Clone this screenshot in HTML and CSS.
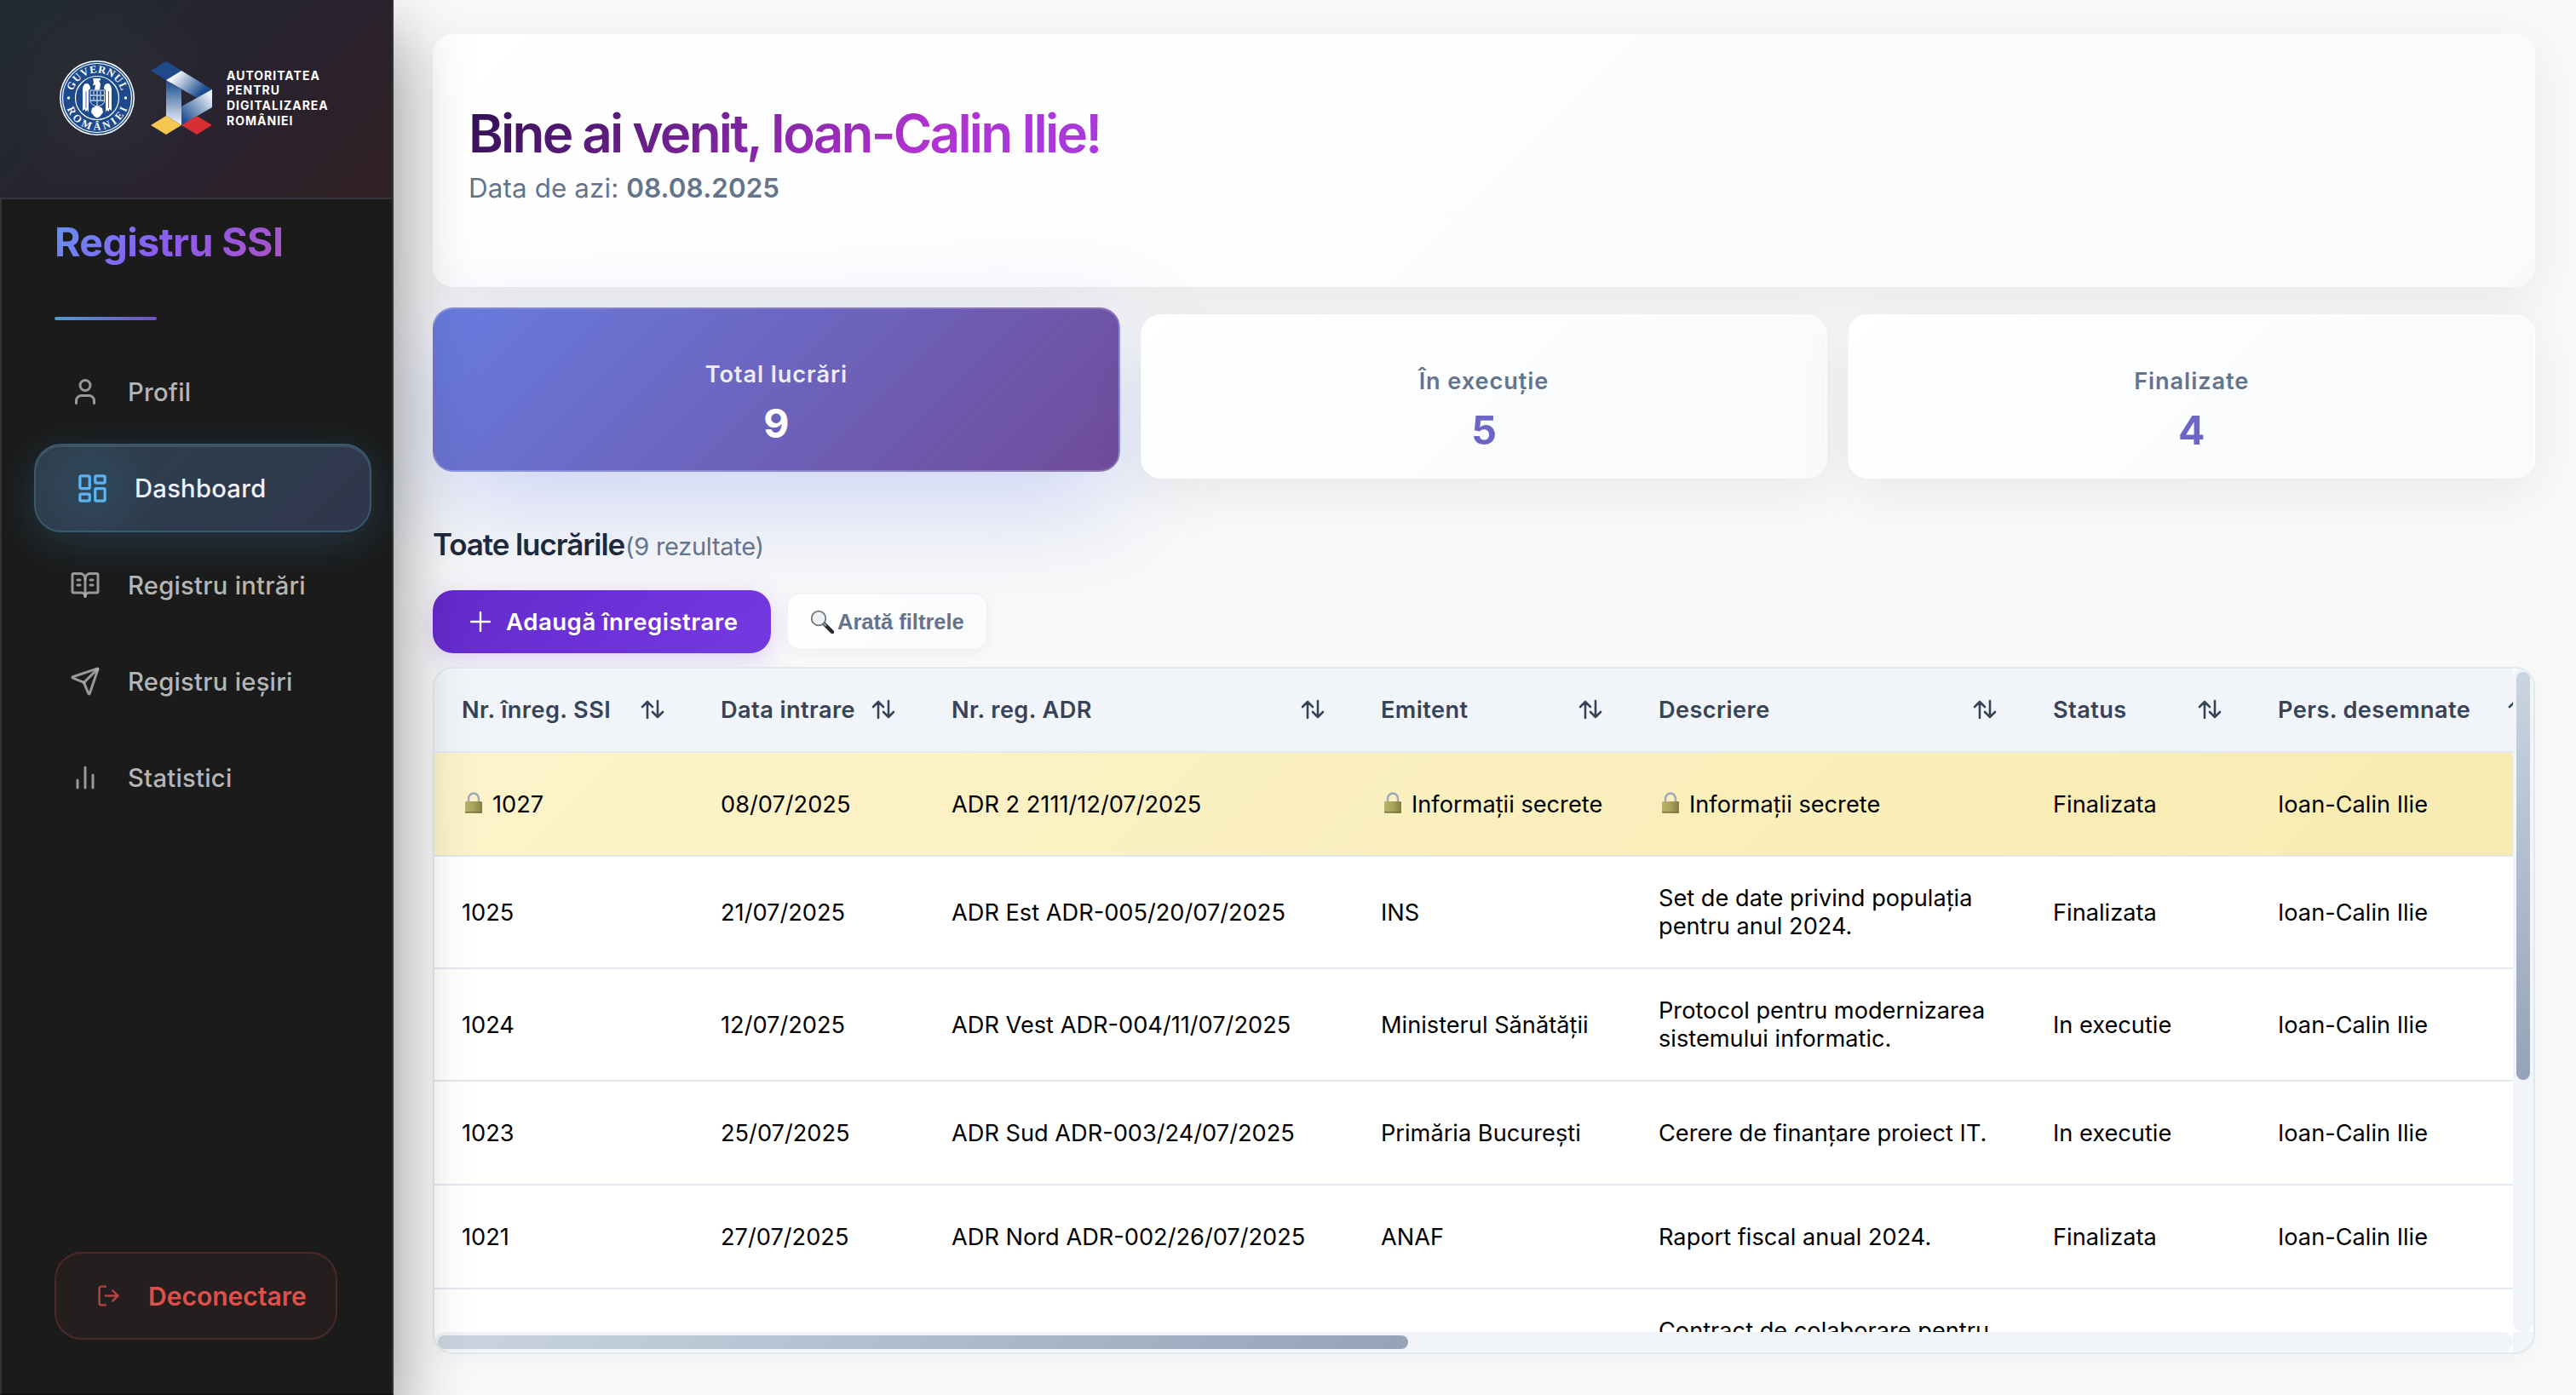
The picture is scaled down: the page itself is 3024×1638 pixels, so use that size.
FILE: index.html
```html
<!DOCTYPE html>
<html lang="ro">
<head>
<meta charset="utf-8">
<title>Registru SSI</title>
<link rel="stylesheet" href="styles.css">
</head>
<body>
<svg class="sprite" aria-hidden="true">
  <defs>
    <linearGradient id="lock-body" x1="0" x2="1"><stop offset="0" stop-color="#b9b36a"/><stop offset=".5" stop-color="#a9a25c"/><stop offset="1" stop-color="#857d42"/></linearGradient>
    <symbol id="sort" viewBox="0 0 28 24"><path d="M8 22V3M2 9l6-6 6 6M20 2v19M14 15l6 6 6-6"/></symbol>
    <symbol id="lock" viewBox="0 0 22 26">
      <path d="M5 12V8a6 6.5 0 0 1 12 0v4" fill="none" stroke="#9fa9b8" stroke-width="2.4"/>
      <rect x="1" y="11" width="20" height="14" rx="1" fill="url(#lock-body)"/>
      <path d="M1 23.6h20" stroke="#7c7440" stroke-width="1.4"/>
    </symbol>
  </defs>
</svg>
<div class="app">
  <aside class="sidebar">
    <header class="brand">
      <svg class="emblem" viewBox="0 0 88 88">
        <defs>
          <path id="arc-top" d="M14.5 44a29.5 29.5 0 0 1 59 0"/>
          <path id="arc-bottom" d="M6.5 44a37.5 37.5 0 0 0 75 0"/>
        </defs>
        <circle cx="44" cy="44" r="44" fill="#fff"/>
        <circle cx="44" cy="44" r="42.5" fill="#1d4a8d"/>
        <circle cx="44" cy="44" r="40.5" fill="none" stroke="#fff" stroke-width="1.2"/>
        <circle cx="44" cy="44" r="25.5" fill="none" stroke="#fff" stroke-width="1.2"/>
        <circle cx="10.5" cy="44" r="1.7" fill="#fff"/>
        <circle cx="77.5" cy="44" r="1.7" fill="#fff"/>
        <text class="emblem-text"><textPath href="#arc-top" startOffset="50%" text-anchor="middle" textLength="76">GUVERNUL</textPath></text>
        <text class="emblem-text"><textPath href="#arc-bottom" startOffset="50%" text-anchor="middle" textLength="92">ROMÂNIEI</textPath></text>
        <path d="M39 21h9v2.500h-2l2 4-1 7h-6l1-6-3 1 1-4z" fill="#fff"/>
        <path d="M36 33c0-4-2-6-5-6-3 1-4 4-4 8v24l2.500-2 1 3 2-2 1.500 3V35zM52 33c0-4 2-6 5-6 3 1 4 4 4 8v24l-2.500-2-1 3-2-2-1.500 3V35z" fill="#fff"/>
        <path d="M31 36v20M57.500 36v20" stroke="#1d4a8d" stroke-width=".8"/>
        <path d="M36 35h16.500v13c0 3-4 5-8 6-4.500-1-8.500-3-8.500-6z" fill="#1d4a8d" stroke="#dfe7f2" stroke-width="1"/>
        <path d="M44 35v18M36 41h16M36 47h16M40 36v4M48 36v4M40 43v3M48 42v4" stroke="#c5d2e6" stroke-width="1.3"/>
        <path d="M38 56l6-3 6 3 1 5-4 5-3 1.500L41 66l-4-5z" fill="#fff"/>
      </svg>
      <svg class="adr-mark" viewBox="0 0 74 86">
        <defs>
          <linearGradient id="adr-top" x1="0" y1=".2" x2="1" y2=".7"><stop offset=".15" stop-color="#f4f6fa"/><stop offset=".85" stop-color="#1d4f92"/></linearGradient>
          <linearGradient id="adr-left" x1="0" y1="0" x2="0" y2="1"><stop offset=".1" stop-color="#2a5a99"/><stop offset="1" stop-color="#f2f5fa"/></linearGradient>
          <linearGradient id="adr-right" x1="1" y1="0" x2="0" y2="1"><stop offset=".1" stop-color="#eef2f8"/><stop offset=".9" stop-color="#1d4f92"/></linearGradient>
        </defs>
        <path d="M1 11L19 0l18 11-18 11z" fill="#1d4a8d"/>
        <path d="M19 22v42l18 11V33z" fill="url(#adr-left)"/>
        <path d="M19 22l18-11 36 22-18 10z" fill="url(#adr-top)"/>
        <path d="M73 33v21L37 75V53z" fill="url(#adr-right)"/>
        <path d="M1 75l18-11 18 11-18 11z" fill="#f6c74f"/>
        <path d="M37 75l18-11 18 11-18 11z" fill="#d72f33"/>
      </svg>
      <p class="brand-name">Autoritatea<br>pentru<br>digitalizarea<br>României</p>
    </header>
    <h1 class="app-title">Registru SSI</h1>
    <div class="title-rule"></div>
    <nav class="menu">
      <a class="menu-item"><svg class="icon" viewBox="0 0 24 24"><path d="M19 21v-2a4 4 0 0 0-4-4H9a4 4 0 0 0-4 4v2"/><circle cx="12" cy="7" r="4"/></svg><span>Profil</span></a>
      <a class="menu-item active"><svg class="icon" viewBox="0 0 24 24"><rect x="3" y="3" width="7" height="9" rx="1"/><rect x="14" y="3" width="7" height="5" rx="1"/><rect x="14" y="12" width="7" height="9" rx="1"/><rect x="3" y="16" width="7" height="5" rx="1"/></svg><span>Dashboard</span></a>
      <a class="menu-item"><svg class="icon" viewBox="0 0 24 24"><path d="M12 7v14"/><path d="M16 12h2"/><path d="M16 8h2"/><path d="M3 18a1 1 0 0 1-1-1V4a1 1 0 0 1 1-1h5a4 4 0 0 1 4 4 4 4 0 0 1 4-4h5a1 1 0 0 1 1 1v13a1 1 0 0 1-1 1h-6a3 3 0 0 0-3 3 3 3 0 0 0-3-3z"/><path d="M6 12h2"/><path d="M6 8h2"/></svg><span>Registru intrări</span></a>
      <a class="menu-item"><svg class="icon" viewBox="0 0 24 24"><path d="M14.536 21.686a.5.5 0 0 0 .937-.024l6.500-19a.496.496 0 0 0-.635-.635l-19 6.500a.5.5 0 0 0-.024.937l7.930 3.180a2 2 0 0 1 1.112 1.110z"/><path d="m21.854 2.147-10.940 10.939"/></svg><span>Registru ieșiri</span></a>
      <a class="menu-item"><svg class="icon" viewBox="0 0 24 24"><path d="M18 20V10"/><path d="M12 20V4"/><path d="M6 20v-6"/></svg><span>Statistici</span></a>
    </nav>
    <button class="logout"><svg class="logout-icon" viewBox="0 0 24 24"><path d="M9 21H5a2 2 0 0 1-2-2V5a2 2 0 0 1 2-2h4"/><path d="M16 17l5-5-5-5"/><path d="M21 12H9"/></svg><span>Deconectare</span></button>
  </aside>
  <main class="content">
    <section class="welcome">
      <h2 class="welcome-title"><span>Bine ai venit, Ioan-Calin Ilie!</span></h2>
      <p class="welcome-date">Data de azi: <strong>08.08.2025</strong></p>
    </section>
    <section class="stats">
      <article class="stat selected"><span class="stat-label">Total lucrări</span><span class="stat-value">9</span></article>
      <article class="stat"><span class="stat-label">În execuție</span><span class="stat-value">5</span></article>
      <article class="stat"><span class="stat-label">Finalizate</span><span class="stat-value">4</span></article>
    </section>
    <div class="list-title"><h3>Toate lucrările</h3><span class="count">(9 rezultate)</span></div>
    <div class="toolbar">
      <button class="add"><svg class="plus" viewBox="0 0 24 24"><path d="M12 1v22M1 12h22"/></svg><span>Adaugă înregistrare</span></button>
      <button class="filters"><svg class="lens" viewBox="0 0 28 28"><path d="M17 17l9 9" stroke="#26282b" stroke-width="4.5" stroke-linecap="round"/><path d="M15 15l4 4" stroke="#8b9097" stroke-width="2.5"/><circle cx="10" cy="10" r="8.3" fill="#eef1f3" stroke="#6f757c" stroke-width="1.8"/></svg><span>Arată filtrele</span></button>
    </div>
    <section class="grid">
      <div class="viewport">
        <table>
          <colgroup><col class="c1"><col class="c2"><col class="c3"><col class="c4"><col class="c5"><col class="c6"><col class="c7"></colgroup>
          <thead><tr>
            <th><div class="head"><span>Nr. înreg. SSI</span><svg class="sort"><use href="#sort"/></svg></div></th>
            <th><div class="head"><span>Data intrare</span><svg class="sort"><use href="#sort"/></svg></div></th>
            <th><div class="head"><span>Nr. reg. ADR</span><svg class="sort"><use href="#sort"/></svg></div></th>
            <th><div class="head"><span>Emitent</span><svg class="sort"><use href="#sort"/></svg></div></th>
            <th><div class="head"><span>Descriere</span><svg class="sort"><use href="#sort"/></svg></div></th>
            <th><div class="head"><span>Status</span><svg class="sort"><use href="#sort"/></svg></div></th>
            <th><div class="head"><span>Pers. desemnate</span><svg class="sort"><use href="#sort"/></svg></div></th>
          </tr></thead>
          <tbody>
            <tr class="secret"><td><svg class="lock"><use href="#lock"/></svg>1027</td><td>08/07/2025</td><td>ADR 2 2111/12/07/2025</td><td><svg class="lock"><use href="#lock"/></svg>Informații secrete</td><td><svg class="lock"><use href="#lock"/></svg>Informații secrete</td><td>Finalizata</td><td>Ioan-Calin Ilie</td></tr>
            <tr class="tall"><td>1025</td><td>21/07/2025</td><td>ADR Est ADR-005/20/07/2025</td><td>INS</td><td>Set de date privind populația<br>pentru anul 2024.</td><td>Finalizata</td><td>Ioan-Calin Ilie</td></tr>
            <tr class="tall"><td>1024</td><td>12/07/2025</td><td>ADR Vest ADR-004/11/07/2025</td><td>Ministerul Sănătății</td><td>Protocol pentru modernizarea<br>sistemului informatic.</td><td>In executie</td><td>Ioan-Calin Ilie</td></tr>
            <tr><td>1023</td><td>25/07/2025</td><td>ADR Sud ADR-003/24/07/2025</td><td>Primăria București</td><td>Cerere de finanțare proiect IT.</td><td>In executie</td><td>Ioan-Calin Ilie</td></tr>
            <tr><td>1021</td><td>27/07/2025</td><td>ADR Nord ADR-002/26/07/2025</td><td>ANAF</td><td>Raport fiscal anual 2024.</td><td>Finalizata</td><td>Ioan-Calin Ilie</td></tr>
            <tr class="tall"><td></td><td></td><td></td><td></td><td>Contract de colaborare pentru<br>&nbsp;</td><td></td><td></td></tr>
          </tbody>
        </table>
      </div>
      <div class="track vertical"><div class="thumb"></div></div>
      <div class="track horizontal"><div class="thumb"></div></div>
      <div class="corner"></div>
    </section>
  </main>
</div>
</body>
</html>
```
FILE: styles.css
```css
* { box-sizing: border-box; margin: 0; padding: 0; }
body { background: #f9f9f9; font-family: Inter, "Liberation Sans", sans-serif; color: #000; overflow: hidden; }
button { font: inherit; border: 0; }
.sprite { position: absolute; width: 0; height: 0; }
.app { display: flex; width: 3024px; height: 1638px; }

/* Sidebar */
.sidebar { position: relative; z-index: 2; flex: 0 0 462px; display: flex; flex-direction: column; background: #1b1b1b; border: 2px solid #333; border-top: 0; border-bottom-color: #131213; box-shadow: 0 40px 80px rgba(0, 0, 0, .45); }
.brand { height: 234px; margin-left: -2px; padding: 0 0 2px 70px; display: flex; align-items: center; border-bottom: 2px solid #38343f; background: radial-gradient(circle at 130px 116px, rgba(255,255,255,.03), transparent 130px), linear-gradient(135deg, #222c30 0%, #272330 50%, #2c212a 75%, #312124 100%); }
.emblem { width: 88px; height: 88px; }
.emblem-text { font: 700 12.5px "Liberation Serif", serif; fill: #fff; }
.adr-mark { width: 74px; height: 86px; margin-left: 18px; }
.brand-name { margin-left: 16px; color: #fff; font-size: 14px; line-height: 17.7px; font-weight: 700; text-transform: uppercase; letter-spacing: 1px; }
.app-title { align-self: flex-start; margin: 20px 0 0 62px; font-size: 46.5px; line-height: 60px; font-weight: 700; letter-spacing: -.6px; color: transparent; background: linear-gradient(135deg, #6395f5 0%, #8b5cf0 50%, #ad52c0 100%); background-clip: text; -webkit-background-clip: text; }
.title-rule { width: 120px; height: 4px; margin: 58px 0 0 62px; border-radius: 2px; background: linear-gradient(90deg, #509bd0, #7150c4); }
.menu { margin: 32px 0 0 30px; display: flex; flex-direction: column; gap: 9.6px; }
.menu-item { width: 396px; height: 103.8px; border: 2px solid transparent; padding-left: 48px; display: flex; align-items: center; border-radius: 32px; color: #b5b5b5; font-size: 29.2px; font-weight: 500; letter-spacing: .25px; }
.menu-item span { padding-top: 1px; }
.icon { width: 36px; height: 36px; margin-right: 32px; fill: none; stroke: rgba(181,181,181,.82); stroke-width: 2; stroke-linecap: round; stroke-linejoin: round; }
.menu-item.active { margin-left: 8px; color: #eef2ff; border-color: #365a70; background: radial-gradient(circle at 68px 50px, rgba(60,140,180,.14), transparent 70px), linear-gradient(135deg, #2d404e, #30364c); box-shadow: 0 12px 48px rgba(66,153,200,.22), inset 0 2px 0 rgba(255,255,255,.1); }
.active .icon { width: 39px; height: 39px; margin: 0 30px 0 -1px; stroke: #5cb5f2; }
.logout { width: 332px; height: 103px; margin: auto 0 63px 62px; padding-left: 47px; display: flex; align-items: center; border: 2px solid #4b2a29; border-radius: 32px; background: #241e1e; color: #df504b; font-size: 30px; font-weight: 600; }
.logout-icon { width: 29px; height: 29px; margin-right: 32px; fill: none; stroke: #b44542; stroke-width: 2; stroke-linecap: round; stroke-linejoin: round; }

/* Content */
.content { flex: 1; padding: 40px 48px 48px 46px; display: flex; flex-direction: column; }
.welcome { height: 297px; padding: 78px 42px 0; border-radius: 24px; background: linear-gradient(135deg, #fff, #f8fafc); box-shadow: 0 16px 64px rgba(0,0,0,.07); }
.welcome-title { font-size: 62px; line-height: 78px; font-weight: 600; letter-spacing: -2.8px; }
.welcome-title span { color: transparent; background: linear-gradient(135deg, #2e1050 0%, #b032d0 70%, #a83be0 100%); background-clip: text; -webkit-background-clip: text; }
.welcome-date { font-size: 31.4px; line-height: 50px; color: #64748b; letter-spacing: .1px; }
.welcome-date strong { font-weight: 600; }
.stats { margin-top: 32px; display: grid; grid-template-columns: repeat(3, 1fr); gap: 24px; }
.stat { position: relative; height: 193px; border: 2px solid rgba(255,255,255,.2); border-radius: 24px; padding-top: 54px; display: flex; flex-direction: column; align-items: center; background: linear-gradient(135deg, #fff, #f8fafc); box-shadow: 0 16px 64px rgba(0,0,0,.07); }
.stat-label { font-size: 27.2px; line-height: 46px; font-weight: 600; letter-spacing: .9px; color: #64748b; }
.stat-value { align-self: stretch; text-align: center; font-size: 46.5px; line-height: 68px; font-weight: 700; color: transparent; background: linear-gradient(135deg, #667eea, #764ba2); background-clip: text; -webkit-background-clip: text; }
.stat.selected { transform: translateY(-8px); background: linear-gradient(135deg, #687cdf, #704b9a); box-shadow: 0 40px 120px rgba(102,126,234,.3); }
.selected .stat-label { color: rgba(255,255,255,.9); }
.selected .stat-value { color: #fff; background: none; }
.list-title { position: relative; height: 50px; margin-top: 52px; display: flex; align-items: baseline; }
.list-title h3 { font-size: 35px; line-height: 50px; font-weight: 600; letter-spacing: -1.1px; color: #1e293b; }
.count { margin-left: 1px; font-size: 29px; color: #64748b; letter-spacing: -.3px; }
.toolbar { position: relative; margin-top: 29px; height: 74px; display: flex; align-items: center; gap: 18px; }
.add { width: 397px; height: 74px; border-radius: 24px; padding-left: 44px; display: flex; align-items: center; color: #fff; font-size: 27.6px; font-weight: 600; letter-spacing: .5px; background: linear-gradient(135deg, #6429cb, #7539e2); box-shadow: 0 8px 32px rgba(117,57,226,.22); }
.plus { width: 24px; height: 24px; margin-right: 18px; fill: none; stroke: #fff; stroke-width: 2.4; stroke-linecap: round; }
.filters { width: 237px; height: 68px; border: 2px solid #eef2f7; border-radius: 16px; padding-left: 26px; display: flex; align-items: center; color: #64748b; font: 700 25.5px "Liberation Sans", sans-serif; background: linear-gradient(135deg, #fff, #f8fafc); box-shadow: 0 4px 16px rgba(0,0,0,.04); }
.lens { width: 28px; height: 28px; margin-right: 4px; fill: none; }

/* Register table */
.grid { position: relative; margin-top: 16px; height: 807px; display: grid; grid-template: 779px 24px / 2440px 24px; border: 2px solid #e2e8f0; border-radius: 24px; overflow: hidden; background: #fff; box-shadow: 0 8px 24px rgba(0,0,0,.03); }
.viewport { overflow: hidden; }
table { width: 2496px; table-layout: fixed; border-collapse: separate; border-spacing: 0; font-size: 27.2px; line-height: 33px; }
.c1 { width: 304px; } .c2 { width: 271px; } .c3 { width: 504px; } .c4 { width: 326px; } .c5 { width: 463px; } .c6 { width: 264px; } .c7 { width: 364px; }
th { height: 99px; padding: 0 32px 1px; text-align: left; background: #f1f5fa; border-bottom: 2px solid #e2e8f0; color: #374357; font-weight: 600; letter-spacing: .4px; }
.head { display: flex; justify-content: space-between; align-items: center; }
.sort { width: 28px; height: 24px; margin-right: 2px; fill: none; stroke: #374357; stroke-width: 2.6; stroke-linecap: round; stroke-linejoin: round; }
td { height: 122px; padding: 0 32px; border-bottom: 2px solid #e2e8f0; white-space: nowrap; }
.tall td { height: 132px; }
.secret { background: linear-gradient(135deg, #fdf3cb, #f8ebb0); }
.lock { width: 22px; height: 26px; margin: 0 11px 0 3px; vertical-align: -2px; }
.track { background: #f1f5fa; border-radius: 12px; }
.vertical { padding: 4px; }
.horizontal { padding: 4px; }
.vertical .thumb { height: 479px; border-radius: 8px; background: linear-gradient(170deg, #cbd5e1, #94a3b8); }
.horizontal .thumb { width: 1139px; height: 16px; border-radius: 8px; background: linear-gradient(135deg, #cbd5e1, #94a3b8); }
.corner { background: #f1f5fa; }
```
